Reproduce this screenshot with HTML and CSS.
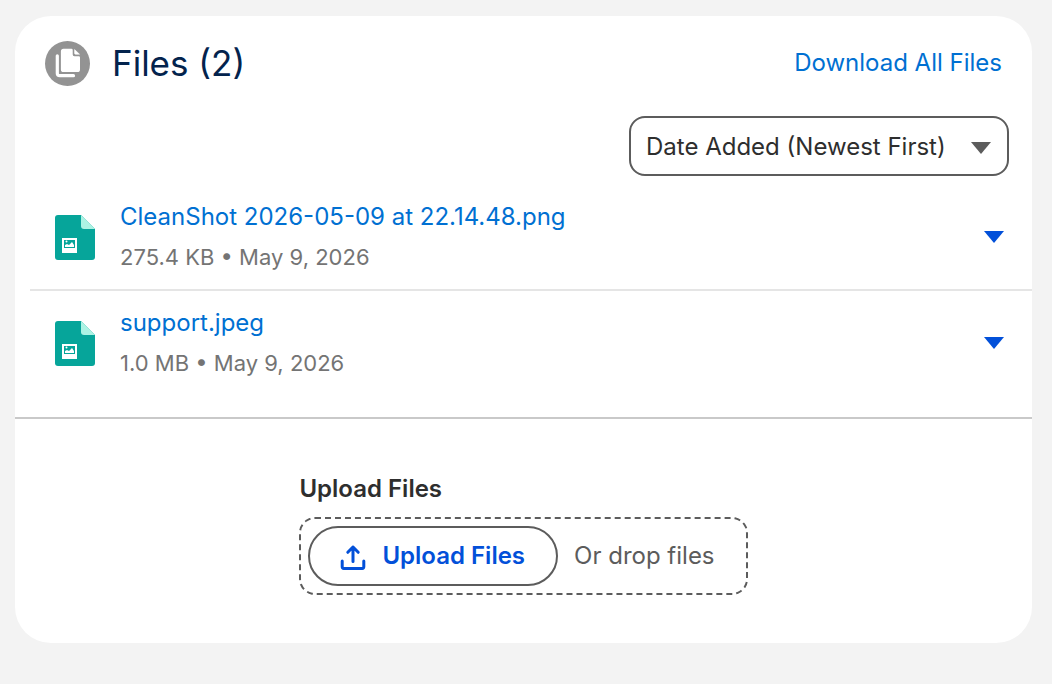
FILE: index.html
```html
<!DOCTYPE html>
<html lang="en">
<head>
  <meta charset="UTF-8">
  <meta name="viewport" content="width=device-width, initial-scale=1.0">
  <title>Files</title>
  <link rel="stylesheet" href="styles.css">
</head>
<body>

  <main class="card">
    <header class="card-header">
      <svg class="files-icon" viewBox="0 0 45 45" aria-hidden="true">
        <circle cx="22.5" cy="22.5" r="22.5" fill="#939393"/>
        <path d="M18.500 7.800h8a1.200 1.200 0 0 1 1.200 1.200v4.500a1.700 1.700 0 0 0 1.700 1.700h4.400A1.200 1.200 0 0 1 35 16.400v12a2.600 2.600 0 0 1-2.600 2.600H18.500a2.600 2.600 0 0 1-2.600-2.600v-18a2.600 2.600 0 0 1 2.600-2.600z" fill="#fff"/>
        <path d="M29.600 8.600l4.900 4.600h-4a.900.900 0 0 1-.900-.900z" fill="#fff" stroke="#fff" stroke-width=".6" stroke-linejoin="round"/>
        <path d="M12.300 14.800v17.400a2.500 2.500 0 0 0 2.500 2.500H28.500" fill="none" stroke="#fff" stroke-width="3.200" stroke-linecap="round"/>
      </svg>
      <h1>Files (2)</h1>
      <a href="#" class="download-link">Download All Files</a>
    </header>

    <div class="sort-row">
      <div class="sort">
        <select class="sort-select" aria-label="Sort files">
          <option>Date Added (Newest First)</option>
        </select>
        <svg class="caret sort-caret" viewBox="0 0 20 12" aria-hidden="true"><path d="M0 0h20L10 12z"/></svg>
      </div>
    </div>

    <ul class="file-list">
      <li class="file">
        <svg class="file-icon" viewBox="0 0 40 45" aria-hidden="true">
          <path d="M3 0h23l14 14v28a3 3 0 0 1-3 3H3a3 3 0 0 1-3-3V3a3 3 0 0 1 3-3z" fill="#06a59a"/>
          <path d="M26 0l14 14H29a3 3 0 0 1-3-3z" fill="#acf3e4"/>
          <path d="M7 23h15v15H7z" fill="#fff"/>
          <path d="M9 25h11v8H9z" fill="#06a59a"/>
          <path d="M10 32v-2l2-1 2 1 3-3 2 3v2z" fill="#fff"/>
          <circle cx="11.500" cy="26.500" r="1" fill="#fff"/>
        </svg>
        <div class="file-info">
          <a href="#" class="file-name">CleanShot 2026-05-09 at 22.14.48.png</a>
          <p class="file-meta">275.4 KB • May 9, 2026</p>
        </div>
        <button type="button" class="file-menu" aria-label="Actions for CleanShot 2026-05-09 at 22.14.48.png">
          <svg class="caret" viewBox="0 0 20 12" aria-hidden="true"><path d="M0 0h20L10 12z"/></svg>
        </button>
      </li>
      <li class="file">
        <svg class="file-icon" viewBox="0 0 40 45" aria-hidden="true">
          <path d="M3 0h23l14 14v28a3 3 0 0 1-3 3H3a3 3 0 0 1-3-3V3a3 3 0 0 1 3-3z" fill="#06a59a"/>
          <path d="M26 0l14 14H29a3 3 0 0 1-3-3z" fill="#acf3e4"/>
          <path d="M7 23h15v15H7z" fill="#fff"/>
          <path d="M9 25h11v8H9z" fill="#06a59a"/>
          <path d="M10 32v-2l2-1 2 1 3-3 2 3v2z" fill="#fff"/>
          <circle cx="11.500" cy="26.500" r="1" fill="#fff"/>
        </svg>
        <div class="file-info">
          <a href="#" class="file-name">support.jpeg</a>
          <p class="file-meta">1.0 MB • May 9, 2026</p>
        </div>
        <button type="button" class="file-menu" aria-label="Actions for support.jpeg">
          <svg class="caret" viewBox="0 0 20 12" aria-hidden="true"><path d="M0 0h20L10 12z"/></svg>
        </button>
      </li>
    </ul>

    <footer class="card-footer">
      <div class="upload">
        <label for="uploadButton" class="upload-label">Upload Files</label>
        <div class="dropzone">
          <button type="button" id="uploadButton" class="upload-button">
            <svg class="upload-icon" viewBox="0 0 26 28" aria-hidden="true">
              <path d="M2.200 19v5.800a1.600 1.600 0 0 0 1.600 1.600h18.400a1.600 1.600 0 0 0 1.600-1.600V19" fill="none" stroke="currentColor" stroke-width="3" stroke-linecap="round"/>
              <path d="M13 19.500V5M7.800 10.300L13 5l5.200 5.300" fill="none" stroke="currentColor" stroke-width="3" stroke-linecap="round" stroke-linejoin="round"/>
            </svg>
            Upload Files
          </button>
          <span class="drop-text">Or drop files</span>
        </div>
      </div>
    </footer>
  </main>

</body>
</html>
```
FILE: styles.css
```css
* {
  box-sizing: border-box;
}

body {
  margin: 0;
  padding: 16px 20px 40px 15px;
  font-family: Inter, "Liberation Sans", sans-serif;
  font-size: 24px;
  line-height: 40px;
  color: #2e2e2e;
  background-color: #f3f3f3;
}

a {
  color: #0070d2;
  text-decoration: none;
}

a:hover {
  text-decoration: underline;
}

button,
select {
  font: inherit;
  cursor: pointer;
}

.card {
  background-color: #ffffff;
  border-radius: 36px;
}

.card-header {
  display: flex;
  align-items: center;
  padding: 24px 30px 0;
}

.files-icon {
  width: 45px;
  height: 45px;
  margin-right: 22px;
}

h1 {
  margin: 0;
  font-size: 35px;
  font-weight: 400;
  line-height: 46px;
  color: #03234d;
}

.download-link {
  margin-left: auto;
}

.sort-row {
  display: flex;
  justify-content: flex-end;
  padding: 30px 23px 9px;
}

.sort {
  position: relative;
}

.sort-select {
  width: 380px;
  max-width: 100%;
  height: 60px;
  padding: 2px 44px 0 15px;
  border: 2px solid #5c5c5c;
  border-radius: 16px;
  background-color: #ffffff;
  color: #2e2e2e;
  appearance: none;
}

.caret {
  display: block;
  width: 20px;
  height: 12px;
  fill: currentColor;
}

/* sits over the select's right padding */
.sort-caret {
  position: absolute;
  top: 26px;
  right: 18px;
  color: #5c5c5c;
  pointer-events: none;
}

.file-list {
  margin: 0;
  padding: 0 0 22px 15px;
  list-style: none;
}

.file {
  display: flex;
  align-items: center;
  padding: 12px 18px 12px 25px;
}

.file + .file {
  border-top: 2px solid #e5e5e5;
}

.file-icon {
  width: 40px;
  height: 45px;
  margin-right: 25px;
}

.file-info {
  flex: 1;
}

.file-name {
  display: block;
}

.file-meta {
  margin: 0;
  font-size: 22px;
  color: #747474;
}

.file-menu {
  padding: 10px;
  border: none;
  background: none;
  color: #0250d9;
}

.card-footer {
  display: flex;
  justify-content: center;
  padding: 50px 20px 48px;
  border-top: 2px solid #c9c9c9;
}

.upload-label {
  display: block;
  margin-bottom: 8px;
  font-weight: 600;
}

.dropzone {
  display: flex;
  align-items: center;
  gap: 16px;
  padding: 7px 31px 7px 7px;
  border: 2px dashed #5c5c5c;
  border-radius: 16px;
}

.upload-button {
  display: flex;
  align-items: center;
  gap: 16px;
  height: 60px;
  padding: 0 31px 0 30px;
  border: 2px solid #5c5c5c;
  border-radius: 30px;
  background-color: #ffffff;
  color: #0250d9;
  font-weight: 600;
}

.upload-icon {
  width: 26px;
  height: 28px;
}

.drop-text {
  color: #5c5c5c;
}
```
